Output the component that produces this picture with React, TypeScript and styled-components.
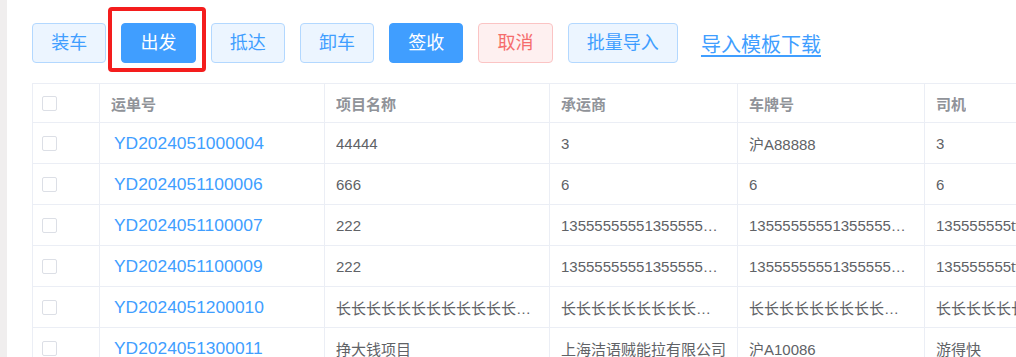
import React from "react";
import styled, { createGlobalStyle, css } from "styled-components";

const GlobalStyle = createGlobalStyle`
  html, body {
    margin: 0;
    padding: 0;
    background: #ffffff;
    overflow: hidden;
  }
  body {
    font-family: "Liberation Sans", "Noto Sans CJK SC", sans-serif;
  }
  * { box-sizing: border-box; }
`;

const Page = styled.div`
  display: flex;
  width: 1016px;
  height: 357px;
  overflow: hidden;
`;

const SideStrip = styled.div`
  width: 7px;
  flex: 0 0 7px;
  background: #f0eeee;
`;

const Main = styled.div`
  flex: 1;
  min-width: 0;
  padding: 23px 0 0 25px;
  overflow: hidden;
`;

const Toolbar = styled.div`
  display: flex;
  align-items: center;
  gap: 15px;
  height: 40px;
  margin-bottom: 20px;
`;

type Variant = "plain" | "primary" | "danger";

const variants: Record<Variant, ReturnType<typeof css>> = {
  plain: css`
    background: #ecf5ff;
    border-color: #b3d8ff;
    color: #409eff;
  `,
  primary: css`
    background: #409eff;
    border-color: #409eff;
    color: #ffffff;
  `,
  danger: css`
    background: #fef0f0;
    border-color: #fbc4c4;
    color: #f56c6c;
  `,
};

const Button = styled.button<{ $variant: Variant }>`
  height: 40px;
  padding: 0 18.15px;
  border: 1px solid;
  border-radius: 4px;
  font-family: "Liberation Sans", "Noto Sans CJK SC", sans-serif;
  font-size: 18px;
  line-height: 1;
  cursor: pointer;
  ${(p) => variants[p.$variant]}
`;

const Highlighted = styled.span`
  position: relative;
  display: inline-flex;
`;

const RedBox = styled.span`
  position: absolute;
  top: -16px;
  left: -13px;
  right: -10px;
  bottom: -9px;
  border: 4px solid #f41d1d;
  border-radius: 4px;
  pointer-events: none;
`;

const TemplateLink = styled.a`
  margin-left: 8px;
  font-size: 20px;
  color: #409eff;
  text-decoration: underline;
  text-underline-offset: 3px;
  cursor: pointer;
`;

const Table = styled.div`
  width: 1400px;
  border-top: 1px solid #ebeef5;
  border-left: 1px solid #ebeef5;
`;

const COLS = "67px 225px 225px 188px 187px 188px 200px";

const Row = styled.div<{ $header?: boolean }>`
  display: grid;
  grid-template-columns: ${COLS};
  height: ${(p) => (p.$header ? "39px" : "41px")};
`;

const Cell = styled.div<{ $header?: boolean }>`
  display: flex;
  align-items: center;
  padding: 0 11px;
  border-right: 1px solid #ebeef5;
  border-bottom: 1px solid #ebeef5;
  font-size: 15px;
  color: ${(p) => (p.$header ? "#909399" : "#606266")};
  font-weight: ${(p) => (p.$header ? 700 : 400)};
  overflow: hidden;
  min-width: 0;
`;

const CheckCell = styled(Cell)`
  padding: 0 0 0 9px;
`;

const Ellipsis = styled.span`
  display: block;
  white-space: nowrap;
  overflow: hidden;
  text-overflow: ellipsis;
  min-width: 0;
`;

const Checkbox = styled.span`
  display: inline-block;
  width: 15px;
  height: 15px;
  border: 1px solid #dcdfe6;
  border-radius: 2px;
  background: #fff;
`;

const OrderLink = styled.span`
  padding-left: 3px;
  font-size: 17.4px;
  color: #409eff;
  white-space: nowrap;
  cursor: pointer;
`;

const long135 = "135555555513555555551355555555";
const longChang = "长长长长长长长长长长长长长长长长长长长长";

const rows = [
  ["YD2024051000004", "44444", "3", "沪A88888", "3", ""],
  ["YD2024051100006", "666", "6", "6", "6", ""],
  ["YD2024051100007", "222", long135, long135, "135555555tttttttttt", ""],
  ["YD2024051100009", "222", long135, long135, "135555555tttttttttt", ""],
  ["YD2024051200010", longChang, longChang, longChang, longChang, ""],
  ["YD2024051300011", "挣大钱项目", "上海洁语贼能拉有限公司", "沪A10086", "游得快", ""],
];

const headers = ["运单号", "项目名称", "承运商", "车牌号", "司机", ""];

export default function App() {
  return (
    <>
      <GlobalStyle />
      <Page>
        <SideStrip />
        <Main>
          <Toolbar>
            <Button $variant="plain">装车</Button>
            <Highlighted>
              <Button $variant="primary">出发</Button>
              <RedBox />
            </Highlighted>
            <Button $variant="plain">抵达</Button>
            <Button $variant="plain">卸车</Button>
            <Button $variant="primary">签收</Button>
            <Button $variant="danger">取消</Button>
            <Button $variant="plain">批量导入</Button>
            <TemplateLink>导入模板下载</TemplateLink>
          </Toolbar>
          <Table>
            <Row $header>
              <CheckCell $header>
                <Checkbox />
              </CheckCell>
              {headers.map((h, i) => (
                <Cell $header key={i}>
                  <Ellipsis>{h}</Ellipsis>
                </Cell>
              ))}
            </Row>
            {rows.map((r) => (
              <Row key={r[0]}>
                <CheckCell>
                  <Checkbox />
                </CheckCell>
                <Cell>
                  <OrderLink>{r[0]}</OrderLink>
                </Cell>
                {r.slice(1).map((v, i) => (
                  <Cell key={i}>
                    <Ellipsis>{v}</Ellipsis>
                  </Cell>
                ))}
              </Row>
            ))}
          </Table>
        </Main>
      </Page>
    </>
  );
}
